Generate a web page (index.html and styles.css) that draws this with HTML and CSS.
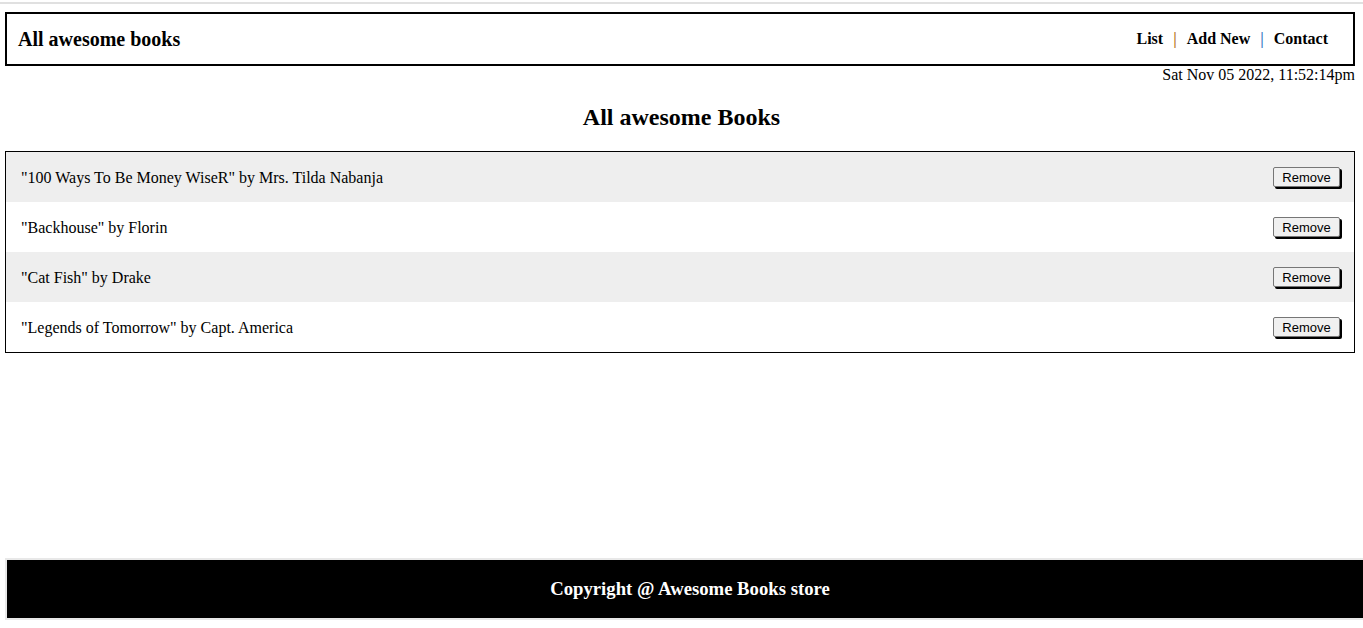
FILE: index.html
```html
<!DOCTYPE html>
<html lang="en">
<head>
<meta charset="utf-8">
<title>Awesome Books</title>
<link rel="stylesheet" href="styles.css">
</head>
<body>
<div class="topline"></div>
<header class="header">
  <h1 class="brand">All awesome books</h1>
  <nav class="nav">
    <a class="nav-link" href="#">List</a>
    <span class="sep sep-a">|</span>
    <a class="nav-link" href="#">Add New</a>
    <span class="sep sep-b">|</span>
    <a class="nav-link" href="#">Contact</a>
  </nav>
</header>
<div class="date">Sat Nov 05 2022, 11:52:14pm</div>
<main class="main">
  <h2 class="title">All awesome Books</h2>
  <ul class="books">
    <li class="book"><span>"100 Ways To Be Money WiseR" by Mrs. Tilda Nabanja</span><button class="remove">Remove</button></li>
    <li class="book"><span>"Backhouse" by Florin</span><button class="remove">Remove</button></li>
    <li class="book"><span>"Cat Fish" by Drake</span><button class="remove">Remove</button></li>
    <li class="book"><span>"Legends of Tomorrow" by Capt. America</span><button class="remove">Remove</button></li>
  </ul>
</main>
<footer class="footer">Copyright @ Awesome Books store</footer>
</body>
</html>
```
FILE: styles.css
```css
html, body {
  overflow-x: hidden;
}
body {
  margin: 0;
  min-height: 100vh;
  display: flex;
  flex-direction: column;
  font-family: "Liberation Serif", "Times New Roman", serif;
  font-size: 16px;
  color: #000;
  background: #fff;
}
.topline {
  height: 2px;
  margin-top: 2px;
  background: #e0e0e0;
}
.header {
  margin: 8px 8px 0 5px;
  height: 50px;
  border: 2px solid #000;
  display: flex;
  align-items: center;
  justify-content: space-between;
  padding: 0 25px 0 11px;
}
.brand {
  margin: 0;
  font-size: 20px;
  font-weight: bold;
}
.nav {
  display: flex;
  align-items: center;
  gap: 10px;
}
.nav-link {
  color: #000;
  text-decoration: none;
  font-weight: bold;
}
.sep {
  font-weight: bold;
}
.sep-a {
  color: #b8782c;
}
.sep-b {
  color: #3d7cc4;
}
.date {
  text-align: right;
  padding-right: 8px;
  line-height: 18px;
  height: 18px;
}
.main {
  display: flex;
  flex-direction: column;
}
.title {
  margin: 19px 0 20px;
  text-align: center;
  font-size: 24px;
  line-height: 28px;
}
.books {
  list-style: none;
  margin: 0 8px 0 5px;
  padding: 0;
  border: 1px solid #000;
}
.book {
  height: 50px;
  display: flex;
  align-items: center;
  justify-content: space-between;
  padding: 0 14px 0 15px;
}
.book > span {
  position: relative;
  top: 1px;
}
.book:nth-child(odd) {
  background: #eeeeee;
}
.remove {
  font-family: "Liberation Sans", Arial, sans-serif;
  font-size: 13px;
  height: 20px;
  width: 67px;
  padding: 0;
  background: #f0f0f0;
  border: 1px solid #767676;
  border-radius: 2px;
  box-shadow: 2px 2px 0 #000;
  color: #000;
}
.footer {
  margin: auto -12px 8px 5px;
  height: 58px;
  border: 2px solid #e8e8e8;
  background: #000;
  color: #fff;
  font-weight: bold;
  font-size: 18.72px;
  display: flex;
  align-items: center;
  justify-content: center;
}
```
